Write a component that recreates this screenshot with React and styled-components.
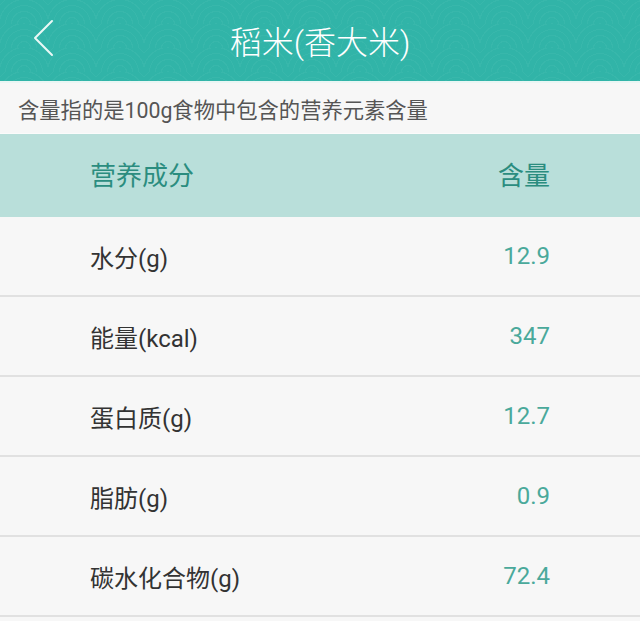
import React from "react";
import styled, { createGlobalStyle } from "styled-components";

const GlobalStyle = createGlobalStyle`
	html, body {
		margin: 0;
		padding: 0;
		background: #f7f7f7;
	}
	body {
		font-family: Roboto, "Noto Sans CJK SC", "Noto Sans", sans-serif;
	}
`;

const nutrients = [
	{ name: "水分(g)", value: "12.9" },
	{ name: "能量(kcal)", value: "347" },
	{ name: "蛋白质(g)", value: "12.7" },
	{ name: "脂肪(g)", value: "0.9" },
	{ name: "碳水化合物(g)", value: "72.4" },
];

export default function App() {
	return (
		<Page>
			<GlobalStyle />
			<TopBar>
				<BackButton aria-label="back">
					<svg width="24" height="40" viewBox="0 0 24 40">
						<path
							d="M20 3 L3 20 L20 37"
							fill="none"
							stroke="#eaf8f6"
							strokeWidth="2"
							strokeLinecap="round"
							strokeLinejoin="round"
						/>
					</svg>
				</BackButton>
				<Title>稻米(香大米)</Title>
			</TopBar>
			<Notice>含量指的是100g食物中包含的营养元素含量</Notice>
			<Table>
				<HeadRow>
					<HeadCell>营养成分</HeadCell>
					<HeadCell>含量</HeadCell>
				</HeadRow>
				{nutrients.map((item) => (
					<Row key={item.name}>
						<Label>{item.name}</Label>
						<Value>{item.value}</Value>
					</Row>
				))}
			</Table>
		</Page>
	);
}

const Page = styled.div`
	width: 640px;
	min-height: 621px;
	background: #f7f7f7;
`;

const TopBar = styled.header`
	position: relative;
	height: 81px;
	display: flex;
	align-items: center;
	justify-content: center;
	background-color: #31b4a8;
	background-image: repeating-radial-gradient(
		circle at 50% 100%,
		rgba(255, 255, 255, 0.035) 0 1px,
		transparent 1px 6px
	);
	background-size: 48px 24px;
	border-bottom: 2px solid #e9f6f4;
`;

const BackButton = styled.button`
	position: absolute;
	left: 32px;
	top: 18px;
	padding: 0;
	border: none;
	background: none;
	display: flex;
`;

const Title = styled.h1`
	margin: 0;
	font-weight: 300;
	font-size: 32px;
	color: #ffffff;
	margin-top: -2px;
`;

const Notice = styled.p`
	margin: 0;
	height: 50px;
	display: flex;
	align-items: center;
	padding: 0 18px;
	font-size: 21.3px;
	color: #555555;
	background: #f7f7f7;
	border-bottom: 1px solid #fbfbfb;
`;

const Table = styled.div`
	display: flex;
	flex-direction: column;
`;

const HeadRow = styled.div`
	height: 83px;
	display: flex;
	align-items: center;
	justify-content: space-between;
	padding: 0 90px;
	background: #b9dfda;
`;

const HeadCell = styled.span`
	font-size: 26px;
	color: #2b8d7f;
	margin-top: -4px;
`;

const Row = styled.div`
	height: 78px;
	display: flex;
	align-items: center;
	justify-content: space-between;
	padding: 0 90px;
	background: #f7f7f7;
	border-bottom: 2px solid #e1e1e1;
`;

const Label = styled.span`
	font-size: 24px;
	color: #333333;
`;

const Value = styled.span`
	font-size: 24px;
	color: #4aa99b;
`;
